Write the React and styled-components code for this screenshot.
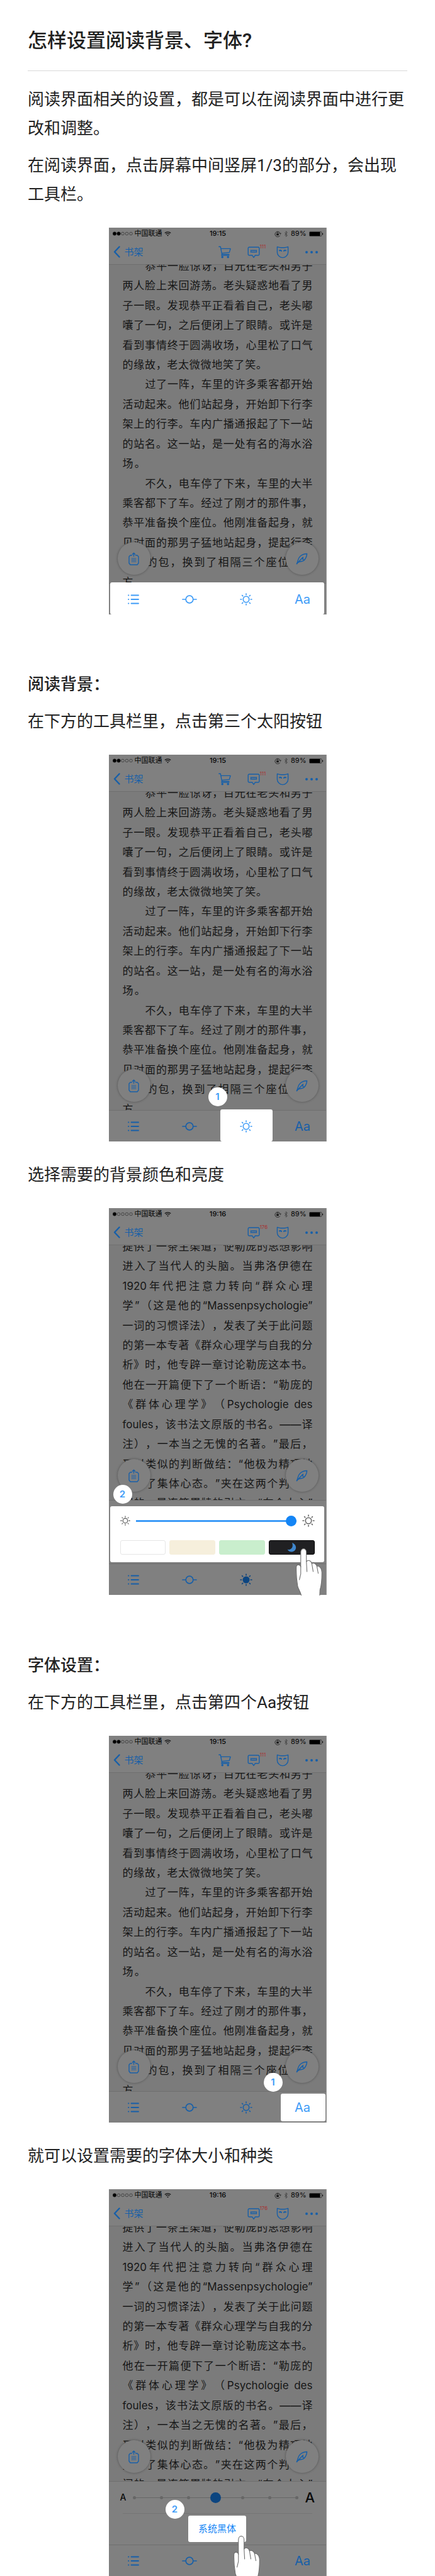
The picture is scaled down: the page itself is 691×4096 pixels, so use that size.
import React from "react";
import styled, { createGlobalStyle, css } from "styled-components";

const dim = {
  page: "#7b7b7b",
  bar: "#808080",
  line: "#6f6f6f",
  blue: "#175fa8",
  deepBlue: "#0c4580",
  red: "#a83232",
  ink: "#161616",
};
const bright = { blue: "#3d9bf7", strong: "#1485f5" };

const GlobalStyle = createGlobalStyle`
  *, *::before, *::after { box-sizing: border-box; }
  body {
    margin: 0;
    background: #fff;
    color: #222;
    font-family: Roboto, "Noto Sans CJK SC", sans-serif;
    text-spacing-trim: space-all;
  }
  svg { display: block; }
  button {
    margin: 0;
    padding: 0;
    border: 0;
    background: none;
    font: inherit;
    color: inherit;
  }
`;

/* ---------- article ---------- */

const Article = styled.main`
  padding: 0 44px;
`;

const Title = styled.h1`
  margin: 0 0 22px;
  padding: 44px 0 26px;
  border-bottom: 1px solid #d9d9d9;
  font-size: 31px;
  line-height: 42px;
  font-weight: 500;
`;

const Paragraph = styled.p`
  margin: 0 0 13px;
  font-size: 26px;
  line-height: 46px;
`;

const SectionTitle = styled.h2`
  margin: 88px 0 13px;
  font-size: 26px;
  line-height: 46px;
  font-weight: 500;
`;

const Figure = styled.figure`
  width: 346px;
  margin: 30px auto;
  padding-bottom: ${(p) => (p.$tail ? "1px" : "0")};
  overflow: hidden;

  &:last-child { margin-bottom: 0; }
`;

/* ---------- phone ---------- */

const Phone = styled.div`
  position: relative;
  display: flex;
  flex-direction: column;
  height: 615px;
  border-right: 1px solid #a0a0a0;
  background: ${dim.bar};
  color: ${dim.ink};
  font-family: Inter, "Noto Sans CJK SC", sans-serif;
`;

const StatusBar = styled.div`
  display: grid;
  grid-template-columns: 1fr auto 1fr;
  align-items: center;
  flex: none;
  height: 19px;
  padding: 0 4px 0 6px;
  font-size: 11px;
  line-height: 19px;
  color: #050505;
`;

const StatusSide = styled.div`
  display: flex;
  align-items: center;
  justify-content: ${(p) => (p.$end ? "flex-end" : "flex-start")};
  gap: ${(p) => (p.$end ? "4px" : "3px")};
`;

const Clock = styled.span`
  font-weight: 500;
`;

const NavBar = styled.div`
  display: flex;
  align-items: center;
  flex: none;
  height: 40px;
  padding: 0 13px 0 7px;
  border-bottom: 1px solid ${dim.line};
  color: ${dim.blue};
`;

const BackButton = styled.button`
  display: flex;
  align-items: center;
  gap: 7px;
  margin-right: auto;
  font-size: 15px;
  line-height: 20px;
`;

const NavButton = styled.button`
  position: relative;
  width: 20px;
  height: 20px;
  margin-left: ${(p) => p.$gap || "26px"};
`;

const Count = styled.span`
  position: absolute;
  left: 20px;
  top: -3px;
  font-size: 8px;
  line-height: 8px;
  color: ${dim.red};
`;

const Reading = styled.div`
  position: relative;
  flex: 1;
  min-height: 0;
  overflow: hidden;
  padding: 0 21px 0 22px;
  background: ${dim.page};
`;

const Lines = styled.div`
  display: grid;
  grid-template-rows: repeat(17, 1fr);
  height: 534px;
  margin-top: -13px;
  font-size: 17px;
  line-height: 31px;
`;

const Line = styled.div`
  width: ${(p) => (p.$part ? `${p.$part}%` : "100%")};
  text-indent: ${(p) => (p.$indent ? "36px" : "0")};
  text-align: justify;
  text-align-last: justify;
  white-space: nowrap;
`;

const RoundButton = styled.button`
  position: absolute;
  bottom: 13px;
  ${(p) => (p.$right ? "right: 12px;" : "left: 14px;")}
  display: flex;
  align-items: center;
  justify-content: center;
  width: 52px;
  height: 52px;
  border-radius: 50%;
  background: ${dim.bar};
  box-shadow: 0 0 3px 1px rgba(60, 60, 60, 0.4);
  color: ${dim.blue};
`;

const Toolbar = styled.div`
  position: relative;
  display: flex;
  align-items: center;
  justify-content: space-between;
  flex: none;
  height: 50px;
  padding: 0 25px 0 27px;
  border-top: 1px solid ${dim.line};
`;

const ToolButton = styled.button`
  position: relative;
  display: flex;
  align-items: center;
  justify-content: center;
  width: 24px;
  height: 24px;
  font-size: 20px;
  line-height: 24px;
  color: ${(p) => (p.$lit ? bright.blue : p.$on ? dim.deepBlue : dim.blue)};
`;

const spots = {
  bar: css`left: 2px; right: 3px; top: -2px; bottom: 0;`,
  sun: css`left: 177px; width: 83px; top: -2px; bottom: 0;`,
  font: css`left: 273px; right: 1px; top: 3px; bottom: 2px;`,
};

const Spot = styled.div`
  position: absolute;
  ${(p) => spots[p.$kind]}
  border-radius: 3px;
  background: #fff;
`;

const Step = styled.span`
  position: absolute;
  left: ${(p) => p.$x}px;
  top: ${(p) => p.$y}px;
  width: 30px;
  height: 30px;
  border-radius: 50%;
  background: #fff;
  color: ${bright.blue};
  font-size: 15px;
  font-weight: 600;
  line-height: 30px;
  text-align: center;
`;

const HandWrap = styled.div`
  position: absolute;
  left: ${(p) => p.$x}px;
  top: ${(p) => p.$y}px;
  pointer-events: none;
`;

/* ---------- panels above the toolbar ---------- */

const Panel = styled.div`
  display: flex;
  flex-direction: column;
  flex: none;
  height: 101px;
  border-top: 1px solid ${dim.line};
`;

const LightCard = styled.div`
  display: flex;
  flex-direction: column;
  gap: 21px;
  margin: 9px 3px 0 2px;
  padding: 13px 15px 12px 16px;
  border-radius: 3px;
  background: #fff;
  color: #666;
`;

const LightRow = styled.div`
  display: flex;
  align-items: center;
  gap: 9px;
  height: 20px;
`;

const Range = styled.input`
  appearance: none;
  flex: 1;
  min-width: 0;
  height: 17px;
  margin: 0;
  background: ${(p) =>
    p.$bare
      ? "none"
      : `linear-gradient(${bright.blue}, ${bright.blue}) center / 100% 3px no-repeat`};

  &::-webkit-slider-thumb {
    appearance: none;
    width: 17px;
    height: 17px;
    border-radius: 50%;
    background: ${(p) => (p.$bare ? dim.deepBlue : bright.strong)};
  }
`;

const Swatches = styled.div`
  display: grid;
  grid-template-columns: repeat(4, 1fr);
  gap: 6px;
`;

const Swatch = styled.button`
  display: flex;
  align-items: center;
  justify-content: center;
  height: 23px;
  border: 1px solid ${(p) => p.$edge || p.$color};
  border-radius: 3px;
  background: ${(p) => p.$color};
`;

const SizeRow = styled.div`
  display: flex;
  align-items: center;
  gap: 4px;
  height: 50px;
  padding: 0 18px;
  color: #0a0a0a;
`;

const SizeMark = styled.span`
  width: ${(p) => (p.$large ? "15px" : "10px")};
  font-size: ${(p) => (p.$large ? "22px" : "14px")};
  font-weight: 500;
  line-height: 24px;
`;

const TickSlider = styled.div`
  position: relative;
  display: flex;
  flex: 1;
`;

const Ticks = styled.div`
  position: absolute;
  inset: 0 6px;
  display: flex;
  align-items: center;
  justify-content: space-between;
  background: linear-gradient(#666, #666) center / calc(100% - 5px) 1px no-repeat;
`;

const Tick = styled.span`
  width: 5px;
  height: 5px;
  border-radius: 50%;
  background: #666;
`;

const SizeRange = styled(Range)`
  position: relative;
`;

const Divider = styled.hr`
  width: 301px;
  margin: 0 0 0 22px;
  border: 0;
  border-top: 1px solid #757575;
`;

const FontButton = styled.button`
  align-self: center;
  width: 92px;
  height: 42px;
  margin-top: 3px;
  border-radius: 3px;
  background: #fff;
  color: ${bright.strong};
  font-size: 15px;
  line-height: 42px;
`;

/* ---------- icons ---------- */

const Stroke = ({ size = 20, w = size, h = size, box = "0 0 20 20", sw = 1.4, children }) => (
  <svg width={w} height={h} viewBox={box} fill="none" stroke="currentColor"
    strokeWidth={sw} strokeLinecap="round" strokeLinejoin="round" aria-hidden="true">
    {children}
  </svg>
);

const Chevron = () => (
  <Stroke w={11} h={19} box="0 0 11 19" sw={2.4}><path d="M9.5 1.5 2 9.5l7.5 8" /></Stroke>
);

const Cart = () => (
  <Stroke>
    <path d="M.8 1.2h2.4L5.6 13.4h11.2M3.9 4.4h15.2l-1.8 6L5.2 11.6" />
    <path d="M5.6 13.4 4.9 15h12" />
    <circle cx="6.2" cy="17.8" r="1.1" fill="currentColor" />
    <circle cx="15.2" cy="17.8" r="1.1" fill="currentColor" />
  </Stroke>
);

const Comment = () => (
  <Stroke>
    <path d="M3 2h14a1.8 1.8 0 0 1 1.8 1.8v9.4A1.8 1.8 0 0 1 17 15h-4.600L10 18.400 7.600 15H3a1.800 1.800 0 0 1-1.800-1.800V3.800A1.800 1.800 0 0 1 3 2Z" />
    <path d="M6.800 7.200h6.400M6.800 9.800h6.400" />
    <path d="M5.600 7v3M14.400 7v3" />
  </Stroke>
);

const Mask = () => (
  <Stroke>
    <path d="M1.400 1.400C4 2.400 5.600 2.800 7 2.800h6c1.400 0 3-.4 5.600-1.400v9c0 4.600-4.600 8.200-8.600 8.200s-8.600-3.600-8.600-8.200Z" />
    <path d="M5 7.400c1-.8 2.400-.6 3 .6M15 7.400c-1-.8-2.400-.6-3 .6" strokeWidth="2" />
  </Stroke>
);

const Dots = () => (
  <svg width="20" height="20" viewBox="0 0 20 20" fill="currentColor" aria-hidden="true">
    <circle cx="2" cy="10" r="2" /><circle cx="10" cy="10" r="2" /><circle cx="18" cy="10" r="2" />
  </svg>
);

const Signal = ({ bars }) => (
  <svg width="32" height="7" viewBox="0 0 32 7" stroke="#222" strokeWidth=".6" aria-hidden="true">
    {[0, 1, 2, 3, 4].map((i) => (
      <circle key={i} cx={3 + i * 6.500} cy="3.500" r={i < bars ? 2.800 : 2.300} fill={i < bars ? "#000" : "none"} />
    ))}
  </svg>
);

const Wifi = () => (
  <svg width="11" height="8" viewBox="0 0 11 8" fill="none" stroke="#111" strokeWidth="1.300" aria-hidden="true">
    <path d="M.8 2.600C3.400.2 7.600.2 10.200 2.600M2.600 4.500c1.600-1.500 4.200-1.500 5.800 0" />
    <path d="m4 6 1.500 1.600L7 6C6.200 5.200 4.800 5.200 4 6Z" fill="#111" stroke="none" />
  </svg>
);

const Lock = () => (
  <svg width="11" height="10" viewBox="0 0 11 10" fill="none" stroke="#222" strokeWidth=".9" aria-hidden="true">
    <path d="M8.800 7.500A4.200 4.200 0 1 1 9.200 4.400" />
    <path d="m7.800 3.800 1.600 1.600 1.200-1.800" />
    <rect x="3.200" y="4.500" width="3.600" height="2.800" fill="#111" stroke="none" />
    <path d="M3.900 4.600V3.500c0-1.400 2.200-1.400 2.200 0v1.100" />
  </svg>
);

const Bluetooth = () => (
  <svg width="7" height="10" viewBox="0 0 7 10" fill="none" stroke="#3c3c3c" strokeWidth=".8" aria-hidden="true">
    <path d="m1 2.700 4.600 4.400-2.200 2.200V.7l2.200 2.200L1 7.300" />
  </svg>
);

const Battery = () => (
  <svg width="23" height="8" viewBox="0 0 23 8" aria-hidden="true">
    <rect x=".5" y=".5" width="19.500" height="7" rx="1.200" fill="none" stroke="#222" strokeWidth=".7" />
    <rect x="1" y="1" width="16.500" height="6" fill="#000" />
    <path d="M21 2.500c1.600.4 1.600 2.600 0 3Z" fill="#000" />
  </svg>
);

const ListIcon = () => (
  <Stroke size={18} box="0 0 18 18" sw={1.800}>
    <path d="M5.500 2.500H17M5.500 9H17M5.500 15.500H17" />
    <path d="M1 2.500h.4M1 9h.4M1 15.500h.4" />
  </Stroke>
);

const ProgressIcon = () => (
  <Stroke w={24} h={16} box="0 0 24 16" sw={1.700}>
    <circle cx="12" cy="8" r="5.800" /><path d="M1 8h5M18 8h5" />
  </Stroke>
);

const Sun = ({ size = 20, filled }) => (
  <Stroke size={size} sw={1.600}>
    <circle cx="10" cy="10" r="4.700" fill={filled ? "currentColor" : "none"} />
    <path d="M10 1v1.700M10 17.300V19M1 10h1.700M17.300 10H19M3.600 3.600l1.200 1.200M15.200 15.200l1.200 1.200M3.600 16.400l1.200-1.200M15.200 4.800l1.200-1.200" />
  </Stroke>
);

const ShareIcon = () => (
  <Stroke w={17} h={21} box="0 0 17 21" sw={1.400}>
    <path d="M5.500 5H3L1 7v10.500L3 20h11l2-2.500V7l-2-2h-2.500" />
    <path d="M8.500 6.500V2M6.500 3.200l2-2 2 2" />
    <path d="M5 10h7M5 12.500h7M5 15h7" strokeWidth="1.100" />
  </Stroke>
);

const Pen = () => (
  <Stroke size={19} sw={1.500}>
    <path d="M1.500 18.500C4 13 3 9.500 7.500 5.500 11 2.400 15 1.500 18.500 1.500c-.3 4-1.600 7.800-4.500 10.800-3.500 3.300-6 1.200-10 3.700" />
    <path d="M1.500 18.500C6 13.500 9 10 12 7.500l-.5 3.500 2.500 1" />
  </Stroke>
);

const Moon = () => (
  <svg width="15" height="15" viewBox="0 0 15 15" aria-hidden="true">
    <path d="M8 .3c8 2.500 8 12.200 1 14-4 .8-7-.8-8.300-3.500C6.600 11.800 10.600 6.600 8 .3Z" fill="#3f86cc" />
  </svg>
);

const Hand = () => (
  <svg width="42" height="77" viewBox="0 0 136 250" aria-hidden="true">
    <g fill="#fff" stroke="#6d6d6d" strokeWidth="3.500" strokeLinejoin="round" strokeLinecap="round">
      <path d="M25 96V20C25-4 54-4 54 20v48c8-10 24-6 28 10 9-5 21 0 26 13 14 0 26 12 26 34 0 35-2 65-10 90l-2 45H30c0-28-16-45-21-65C3 160 1 130 2 97c1-17 20-15 23-1Z" />
      <path d="M54 66l3 54M82 78l7 42M108 91l7 38M25 94v38l-7 30" fill="none" />
    </g>
  </svg>
);

/* ---------- content ---------- */

const novel = [
  { text: "恭平一脸惊讶，目光在老头和男子", indent: true },
  { text: "两人脸上来回游荡。老头疑惑地看了男" },
  { text: "子一眼。发现恭平正看着自己，老头嘟" },
  { text: "囔了一句，之后便闭上了眼睛。或许是" },
  { text: "看到事情终于圆满收场，心里松了口气" },
  { text: "的缘故，老太微微地笑了笑。", part: 76 },
  { text: "过了一阵，车里的许多乘客都开始", indent: true },
  { text: "活动起来。他们站起身，开始卸下行李" },
  { text: "架上的行李。车内广播通报起了下一站" },
  { text: "的站名。这一站，是一处有名的海水浴" },
  { text: "场。", part: 12 },
  { text: "不久，电车停了下来，车里的大半", indent: true },
  { text: "乘客都下了车。经过了刚才的那件事，" },
  { text: "恭平准备换个座位。他刚准备起身，就" },
  { text: "见对面的那男子猛地站起身，提起行李" },
  { text: "架上的包，换到了相隔三个座位的地" },
  { text: "方。", part: 12 },
];

const psychology = [
  "提供了一条主渠道，使勒庞的思想影响",
  "进入了当代人的头脑。当弗洛伊德在",
  "1920年代把注意力转向“群众心理",
  "学”（这是他的“Massenpsychologie”",
  "一词的习惯译法），发表了关于此问题",
  "的第一本专著《群众心理学与自我的分",
  "析》时，他专辟一章讨论勒庞这本书。",
  "他在一开篇便下了一个断语：“勒庞的",
  "《群体心理学》（Psychologie des",
  "foules，该书法文原版的书名。——译",
  "注），一本当之无愧的名著。”最后，",
  "又以类似的判断做结：“他极为精巧地",
  "描述了集体心态。”夹在这两个判断之",
  "间的，是连篇累牍的引文，“在个人心”",
].map((text) => ({ text }));

function Reader({ bars, time, count, cart, lines, panel, spot, active, hideAa, hideSun, step, hand }) {
  return (
    <Phone>
      <StatusBar>
        <StatusSide>
          <Signal bars={bars} />
          <span>中国联通</span>
          <Wifi />
        </StatusSide>
        <Clock>{time}</Clock>
        <StatusSide $end>
          <Lock />
          <Bluetooth />
          <span>89%</span>
          <Battery />
        </StatusSide>
      </StatusBar>
      <NavBar>
        <BackButton type="button"><Chevron />书架</BackButton>
        {cart && <NavButton type="button" aria-label="购物车"><Cart /></NavButton>}
        <NavButton type="button" aria-label="评论"><Comment /><Count>{count}</Count></NavButton>
        <NavButton type="button" aria-label="面具"><Mask /></NavButton>
        <NavButton type="button" aria-label="更多"><Dots /></NavButton>
      </NavBar>
      <Reading>
        <Lines>
          {lines.map((l) => (
            <Line key={l.text} $indent={l.indent} $part={l.part}>{l.text}</Line>
          ))}
        </Lines>
        <RoundButton type="button" aria-label="分享"><ShareIcon /></RoundButton>
        <RoundButton type="button" aria-label="笔记" $right><Pen /></RoundButton>
      </Reading>
      {panel}
      <Toolbar>
        {spot && <Spot $kind={spot} />}
        <ToolButton type="button" aria-label="目录" $lit={spot === "bar"}><ListIcon /></ToolButton>
        <ToolButton type="button" aria-label="进度" $lit={spot === "bar"}><ProgressIcon /></ToolButton>
        <ToolButton type="button" aria-label="亮度" $lit={spot === "bar" || spot === "sun"} $on={active === "sun"}>
          {!hideSun && <Sun filled={active === "sun"} />}
        </ToolButton>
        <ToolButton type="button" aria-label="字体" $lit={spot === "bar" || spot === "font"}>
          {!hideAa && "Aa"}
        </ToolButton>
      </Toolbar>
      {step && <Step $x={step.x} $y={step.y}>{step.n}</Step>}
      {hand && <HandWrap $x={hand.x} $y={hand.y}><Hand /></HandWrap>}
    </Phone>
  );
}

const NovelReader = (props) => (
  <Reader bars={2} time="19:15" count="111" cart lines={novel} {...props} />
);

const PsychologyReader = (props) => (
  <Reader bars={1} time="19:16" count="176" lines={psychology} {...props} />
);

const LightPanel = () => (
  <Panel>
    <LightCard>
      <LightRow>
        <Sun size={16} />
        <Range type="range" min="0" max="100" defaultValue="100" aria-label="亮度" />
        <Sun size={20} />
      </LightRow>
      <Swatches>
        <Swatch type="button" aria-label="白色" $color="#ffffff" $edge="#e6e6e6" />
        <Swatch type="button" aria-label="米色" $color="#f6efdc" />
        <Swatch type="button" aria-label="绿色" $color="#c9eecd" />
        <Swatch type="button" aria-label="夜间" $color="#202022" $edge="#0a0a0a"><Moon /></Swatch>
      </Swatches>
    </LightCard>
  </Panel>
);

const FontPanel = () => (
  <Panel>
    <SizeRow>
      <SizeMark>A</SizeMark>
      <TickSlider>
        <Ticks>{[1, 2, 3, 4, 5, 6, 7].map((n) => <Tick key={n} />)}</Ticks>
        <SizeRange type="range" min="1" max="7" defaultValue="4" aria-label="字体大小" $bare />
      </TickSlider>
      <SizeMark $large>A</SizeMark>
    </SizeRow>
    <Divider />
    <FontButton type="button">系统黑体</FontButton>
  </Panel>
);

export default function App() {
  return (
    <>
      <GlobalStyle />
      <Article lang="zh-CN">
        <Title>怎样设置阅读背景、字体?</Title>
        <Paragraph>阅读界面相关的设置，都是可以在阅读界面中进行更改和调整。</Paragraph>
        <Paragraph>在阅读界面，点击屏幕中间竖屏1/3的部分，会出现工具栏。</Paragraph>
        <Figure><NovelReader spot="bar" /></Figure>

        <SectionTitle>阅读背景：</SectionTitle>
        <Paragraph>在下方的工具栏里，点击第三个太阳按钮</Paragraph>
        <Figure><NovelReader spot="sun" step={{ n: 1, x: 158, y: 529 }} /></Figure>
        <Paragraph>选择需要的背景颜色和亮度</Paragraph>
        <Figure $tail>
          <PsychologyReader panel={<LightPanel />} active="sun" hideAa
            step={{ n: 2, x: 7, y: 440 }} hand={{ x: 297, y: 541 }} />
        </Figure>

        <SectionTitle>字体设置：</SectionTitle>
        <Paragraph>在下方的工具栏里，点击第四个Aa按钮</Paragraph>
        <Figure><NovelReader spot="font" step={{ n: 1, x: 246, y: 536 }} /></Figure>
        <Paragraph>就可以设置需要的字体大小和种类</Paragraph>
        <Figure>
          <PsychologyReader panel={<FontPanel />} hideSun
            step={{ n: 2, x: 90, y: 494 }} hand={{ x: 198, y: 551 }} />
        </Figure>
      </Article>
    </>
  );
}
